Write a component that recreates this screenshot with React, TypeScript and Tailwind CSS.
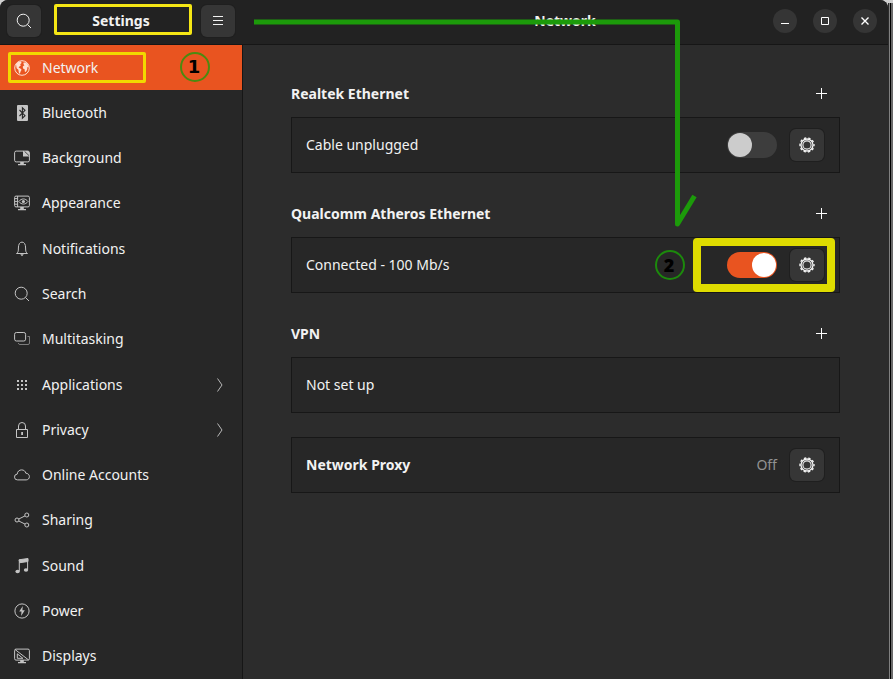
import { useState, type ReactNode } from "react";

const icons: Record<string, ReactNode> = {
  network: (
    <>
      <circle cx="8" cy="8" r="7.3" />
      <path
        d="M2 4.2 4.6 1.8 7 1.5 7.6 3 6.2 4.2 6.8 5.4 5.4 6.6 4.6 7.6 6.4 8.4 7.6 9.8 6.6 11.6 5.8 14 4.8 12.4 4.4 9.8 2.6 8.2ZM9.6 2.4 12 2.6 14 4.8 14.8 7.4 13.4 7 13.2 9.6 11.8 12 10.8 11.4 10.6 9.2 9 8.4 8.8 6.4 10.4 5.2 9.4 4Z"
        fill="currentColor"
        stroke="none"
      />
    </>
  ),
  bluetooth: (
    <>
      <rect x="3" y="0" width="11" height="16" rx="1" fill="currentColor" stroke="none" />
      <path d="M5.5 5 11 10.7 8.4 13.2V2.8L11 5.3 5.5 11" stroke="#272727" strokeWidth="1.1" />
    </>
  ),
  background: (
    <>
      <rect x="0.6" y="1.1" width="14.8" height="10.8" rx="1.6" />
      <path d="M9 1v5.6h6.4V2.6L13.800 1z" fill="currentColor" stroke="none" />
      <path d="m10.600 1.400 4.400 4.200" stroke="#272727" strokeWidth="0.800" />
      <path d="M6.2 12h3.6v2H12v1.2H4V14h2.200z" fill="currentColor" stroke="none" />
    </>
  ),
  appearance: (
    <>
      <rect x="0.6" y="1.1" width="14.8" height="10.8" rx="1.4" />
      <path d="M3.6 1v11M1 3.6h2.500M1 6.400h2.500M1 9.200h2.500" />
      <path d="M4.800 6.500c2.600-3.400 6.600-3.400 9.200 0-2.600 3.400-6.600 3.400-9.200 0z" />
      <circle cx="9.400" cy="6.500" r="1.600" fill="currentColor" stroke="none" />
      <path d="M6.200 12h3.600v2H12v1.200H4V14h2.200z" fill="currentColor" stroke="none" />
    </>
  ),
  notifications: (
    <>
      <path d="M2.500 12.500c1.600-1 1.900-2.200 1.900-5.500 0-3.600 1.200-5.900 3.600-5.900s3.600 2.300 3.600 5.900c0 3.300.3 4.500 1.900 5.500z" />
      <path d="M6.200 13.300h3.600L8 15.200z" fill="currentColor" stroke="none" />
    </>
  ),
  search: (
    <>
      <circle cx="7.200" cy="7.200" r="6" />
      <path d="m11.500 11.500 3.500 3.500" />
    </>
  ),
  multitasking: (
    <>
      <rect x="0.600" y="1.500" width="11" height="8.500" rx="1.800" />
      <path d="M13.500 5.500h2v6.500a1.500 1.500 0 0 1-1.500 1.500H5.500A1.500 1.500 0 0 1 4.500 12" opacity="0.55" />
    </>
  ),
  applications: (
    <path
      d="M3 3h2v2H3zM7 3h2v2H7zM11 3h2v2h-2zM3 7h2v2H3zM7 7h2v2H7zM11 7h2v2h-2zM3 11h2v2H3zM7 11h2v2H7zM11 11h2v2h-2z"
      fill="currentColor"
      stroke="none"
    />
  ),
  privacy: (
    <>
      <path d="M2.500 7.500h11v8h-11zM4.500 7.500V4a3.500 3.500 0 0 1 7 0v3.500" />
      <path d="M7.200 10h1.800v3H7.200z" fill="currentColor" stroke="none" />
    </>
  ),
  accounts: (
    <path d="M3.600 12.900a2.900 2.900 0 0 1-.4-5.800C3.500 4.300 5.300 2.900 7.600 2.900c2.200 0 3.800 1.300 4.200 3.300 2 0 3.600 1.600 3.600 3.400 0 1.900-1.400 3.300-3.200 3.300z" />
  ),
  sharing: (
    <>
      <circle cx="3" cy="8" r="2" />
      <circle cx="12.800" cy="3" r="2" />
      <circle cx="12.800" cy="13" r="2" />
      <path d="m4.800 7 6.200-3.100M4.800 9l6.200 3.100" />
    </>
  ),
  sound: (
    <>
      <path d="M5 1.800 14 .5v3L5.800 4.700z" fill="currentColor" />
      <path d="M5.300 2v11M13.600 1v10.600" />
      <ellipse cx="3.600" cy="13.500" rx="2.200" ry="1.700" fill="currentColor" stroke="none" />
      <ellipse cx="12" cy="12" rx="2.200" ry="1.700" fill="currentColor" stroke="none" />
    </>
  ),
  power: (
    <>
      <circle cx="8" cy="8" r="7.100" />
      <path d="M8.800 3 5.200 8.600h2.300L7.100 13l3.700-5.700H8.400z" fill="currentColor" stroke="none" />
    </>
  ),
  displays: (
    <>
      <rect x="0.600" y="1.100" width="14.800" height="11" rx="1.400" />
      <path d="m1 1.500 13.500 10.400M3.300 5.800v4.500h5.600z" />
      <path d="M6.200 12h3.600v2H12v1.200H4V14h2.200z" fill="currentColor" stroke="none" />
    </>
  ),
  menu: <path d="M3 3.500h10M3 7.500h10M3 11.500h10" />,
  plus: <path d="M7.500 2v11M2 7.500h11" />,
  minimize: <path d="M4 10.500h8" />,
  maximize: <path d="M4.500 4.500h7v7h-7z" />,
  close: <path d="m4.500 4.500 7 7m0-7-7 7" strokeWidth="1.400" />,
  chevron: <path d="m5.500 1.500 4.500 6.500-4.500 6.500" />,
  gear: (
    <>
      <circle cx="8" cy="8" r="7" strokeWidth="1.400" strokeDasharray="2.400 1.998" strokeDashoffset="1.200" />
      <circle cx="8" cy="8" r="6" strokeWidth="1.300" />
      <circle cx="8" cy="8" r="4.100" strokeWidth="1.100" />
    </>
  ),
};

function Icon({ name, className = "" }: { name: string; className?: string }) {
  return (
    <svg
      viewBox="0 0 16 16"
      className={`size-4 shrink-0 ${className}`}
      fill="none"
      stroke="currentColor"
      strokeWidth="1"
      aria-hidden="true"
    >
      {icons[name]}
    </svg>
  );
}

const pages = [
  { id: "network", label: "Network" },
  { id: "bluetooth", label: "Bluetooth" },
  { id: "background", label: "Background" },
  { id: "appearance", label: "Appearance" },
  { id: "notifications", label: "Notifications" },
  { id: "search", label: "Search" },
  { id: "multitasking", label: "Multitasking" },
  { id: "applications", label: "Applications", nested: true },
  { id: "privacy", label: "Privacy", nested: true },
  { id: "accounts", label: "Online Accounts" },
  { id: "sharing", label: "Sharing" },
  { id: "sound", label: "Sound" },
  { id: "power", label: "Power" },
  { id: "displays", label: "Displays" },
];

function ToolButton({ icon, label }: { icon: string; label: string }) {
  return (
    <button
      type="button"
      aria-label={label}
      className="flex h-8 w-[34px] shrink-0 items-center justify-center rounded-md bg-[#363636] text-[#f2f2f2] shadow-[0_0_0_1px_#1f1f1f]"
    >
      <Icon name={icon} />
    </button>
  );
}

function WindowButton({ icon, label }: { icon: string; label: string }) {
  return (
    <button
      type="button"
      aria-label={label}
      className="flex size-6 items-center justify-center rounded-full bg-[#353535] text-white"
    >
      <Icon name={icon} />
    </button>
  );
}

function Toggle({ label, initial }: { label: string; initial: boolean }) {
  const [on, setOn] = useState(initial);
  return (
    <input
      type="checkbox"
      role="switch"
      aria-label={label}
      checked={on}
      onChange={(e) => setOn(e.target.checked)}
      className="flex h-[26px] w-[50px] shrink-0 appearance-none items-center rounded-full bg-[#3d3d3d] px-px before:size-6 before:rounded-full before:bg-[#cccccc] checked:justify-end checked:bg-[#e95420] checked:before:bg-white"
    />
  );
}

function Card({ children }: { children: ReactNode }) {
  return (
    <div className="flex h-14 items-center gap-[13px] border border-[#171717] bg-[#272727] pr-[15px] pl-[14px]">
      {children}
    </div>
  );
}

function Section({ title, children }: { title: string; children: ReactNode }) {
  return (
    <section>
      <div className="flex h-10 items-center justify-between pr-[10px] pb-[6px]">
        <h2 className="font-bold">{title}</h2>
        <button type="button" aria-label={`Add ${title}`} className="text-white">
          <Icon name="plus" />
        </button>
      </div>
      <Card>{children}</Card>
    </section>
  );
}

export default function App() {
  return (
    <div className="relative flex min-h-screen bg-[#d0d0d0] font-['Noto_Sans',sans-serif] text-sm text-[#f2f2f2]">
      <div className="flex min-w-0 flex-1 flex-col overflow-hidden rounded-t-lg bg-[#2c2c2c]">
        <header className="flex h-[45px] shrink-0 border-b border-[#161616] bg-[#222222] pb-[3px]">
          <div className="flex w-[242px] shrink-0 items-center justify-between px-[7px]">
            <ToolButton icon="search" label="Search settings" />
            <h1 className="font-bold">Settings</h1>
            <ToolButton icon="menu" label="Menu" />
          </div>
          <div className="relative flex flex-1 items-center justify-center">
            <p className="font-bold">Network</p>
            <div className="absolute right-[11px] flex gap-4">
              <WindowButton icon="minimize" label="Minimize" />
              <WindowButton icon="maximize" label="Maximize" />
              <WindowButton icon="close" label="Close" />
            </div>
          </div>
        </header>

        <div className="flex flex-1">
          <nav className="flex w-[243px] shrink-0 flex-col border-r border-[#161616] bg-[#272727]">
            {pages.map((page, i) => (
              <a
                key={page.id}
                href={`#${page.id}`}
                aria-current={i === 0 ? "page" : undefined}
                className="flex min-h-11 flex-1 items-center gap-3 px-[14px] aria-[current=page]:bg-[#e95420]"
              >
                <Icon name={page.id} className={i === 0 ? "text-[#ffe0d0]" : "text-[#c4c4c4]"} />
                <span className="flex-1">{page.label}</span>
                {page.nested && <Icon name="chevron" className="text-[#b8b8b8]" />}
              </a>
            ))}
          </nav>

          <main className="flex flex-1 flex-col gap-6 px-12 pt-8">
            <Section title="Realtek Ethernet">
              <span className="flex-1">Cable unplugged</span>
              <Toggle label="Realtek Ethernet" initial={false} />
              <ToolButton icon="gear" label="Realtek Ethernet options" />
            </Section>
            <Section title="Qualcomm Atheros Ethernet">
              <span className="flex-1">Connected - 100 Mb/s</span>
              <Toggle label="Qualcomm Atheros Ethernet" initial={true} />
              <ToolButton icon="gear" label="Qualcomm Atheros Ethernet options" />
            </Section>
            <Section title="VPN">
              <span>Not set up</span>
            </Section>
            <Card>
              <h2 className="flex-1 font-bold">Network Proxy</h2>
              <span className="text-[#929292]">Off</span>
              <ToolButton icon="gear" label="Network proxy options" />
            </Card>
          </main>
        </div>
      </div>

      {/* Frame edge and the strip of desktop beyond it */}
      <div className="mt-[3px] flex w-[5px] shrink-0 bg-[#6c6c6c]">
        <div className="w-[3px] border-x border-l-[#2c2c2c] border-r-black bg-[#808080]" />
      </div>

      {/* Tutorial marks drawn over the window */}
      <div className="pointer-events-none absolute inset-0">
        <div className="absolute top-1 left-[54px] h-[31px] w-[138px] rounded-xs border-3 border-[#f5e615]" />
        <div className="absolute top-[52px] left-2 h-[31px] w-[138px] rounded-xs border-3 border-[#f2d800]" />
        <div className="absolute top-[238px] left-[693px] h-[54px] w-[142px] rounded-sm border-8 border-[#dfdc00]" />
        <div className="absolute top-[52px] left-[180px] flex size-[30px] items-center justify-center rounded-full border-2 border-[#4c8a10] pr-[2px] font-['DejaVu_Sans',sans-serif] text-lg font-bold text-black">
          1
        </div>
        <div className="absolute top-[250px] left-[655px] flex size-[30px] items-center justify-center rounded-full border-2 border-[#1c8a0c] pr-[2px] font-['Noto_Sans',sans-serif] text-lg font-black text-black">
          2
        </div>
        <svg
          className="absolute top-0 left-0 h-60 w-[720px]"
          viewBox="0 0 720 240"
          fill="none"
          stroke="#1c9a0a"
          strokeWidth="5"
          aria-hidden="true"
        >
          <path d="M254 22H677.500V224L694.500 196" strokeLinejoin="round" />
        </svg>
      </div>
    </div>
  );
}
